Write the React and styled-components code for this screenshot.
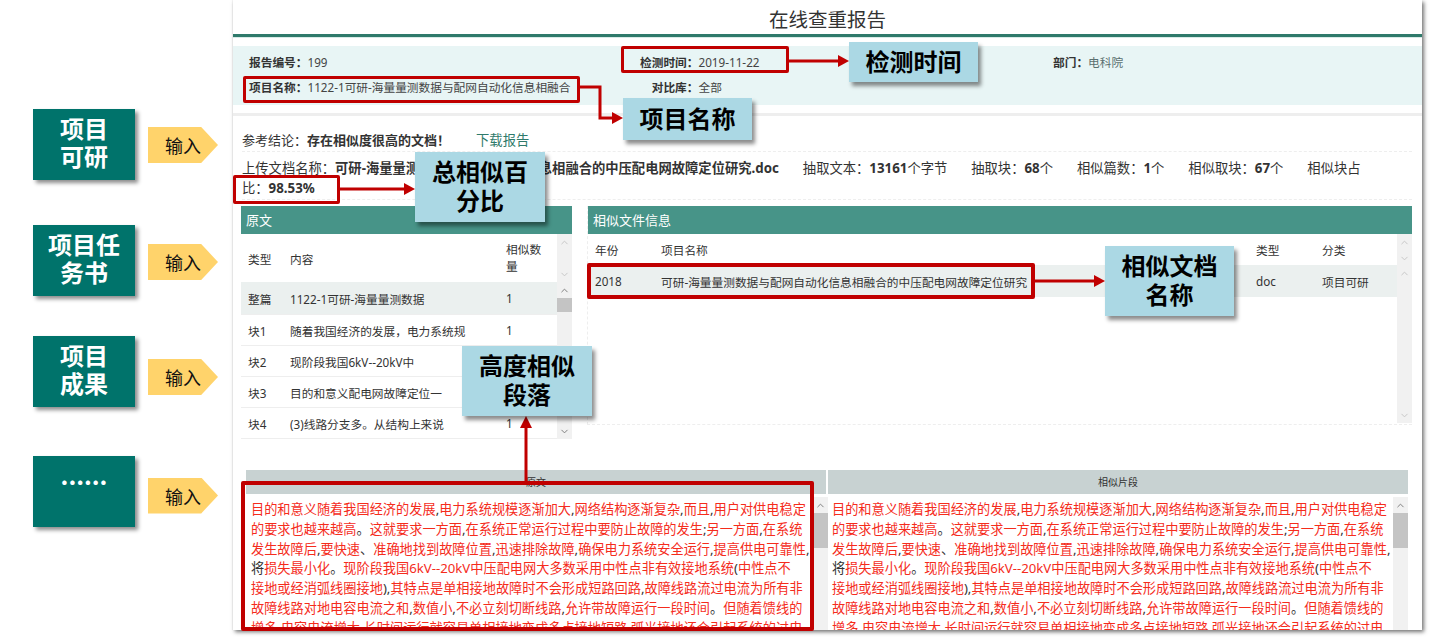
import styled, { createGlobalStyle } from 'styled-components'
import { ChevronUp, ChevronDown } from 'lucide-react'

const green = '#479488'
const red = '#c00000'
const hitRed = '#f52c1c'
// 全角标点
const COLON = '\uFF1A'
const BANG = '\uFF01'
const COMMA = '\uFF0C'

const labels = [
  { lines: ['项目', '可研'], top: 109, nudge: 1 },
  { lines: ['项目任', '务书'], top: 45, nudge: 3 },
  { lines: ['项目', '成果'], top: 40, nudge: 11 },
  { lines: ['......'], top: 49, nudge: 8, dots: true },
]

const originRows = [
  ['整篇', '1122-1可研-海量量测数据', '1'],
  ['块1', `随着我国经济的发展${COMMA}电力系统规`, '1'],
  ['块2', '现阶段我国6kV--20kV中', '1'],
  ['块3', '目的和意义配电网故障定位一', '1'],
  ['块4', '(3)线路分支多。从结构上来说', '1'],
]

const stats = [
  ['抽取文本', '13161', '个字节'],
  ['抽取块', '68', '个'],
  ['相似篇数', '1', '个'],
  ['相似取块', '67', '个'],
  ['相似块占比', '98.53%', ''],
]

const paragraph = [
  '目的和意义随着我国经济的发展,电力系统规模逐渐加大,网络结构逐渐复杂,而且,用户对供电稳定',
  '的要求也越来越高。这就要求一方面,在系统正常运行过程中要防止故障的发生;另一方面,在系统',
  '发生故障后,要快速、准确地找到故障位置,迅速排除故障,确保电力系统安全运行,提高供电可靠性,',
  '将损失最小化。现阶段我国6kV--20kV中压配电网大多数采用中性点非有效接地系统(中性点不',
  '接地或经消弧线圈接地),其特点是单相接地故障时不会形成短路回路,故障线路流过电流为所有非',
  '故障线路对地电容电流之和,数值小,不必立刻切断线路,允许带故障运行一段时间。但随着馈线的',
  '增多,电容电流增大,长时间运行就容易单相接地变成多点接地短路,弧光接地还会引起系统的过电',
]

const frames = [
  { x: 621, y: 46, w: 168, h: 27 },
  { x: 243, y: 76, w: 337, h: 27 },
  { x: 233, y: 175, w: 107, h: 29 },
  { x: 587, y: 263, w: 448, h: 36, thick: true },
  { x: 241, y: 481, w: 573, h: 150, thick: true },
]

const callouts = [
  { x: 849, y: 42, w: 129, h: 40, text: '检测时间' },
  { x: 623, y: 98, w: 129, h: 42, text: '项目名称' },
  { x: 415, y: 152, w: 130, h: 70, text: '总相似百分比' },
  { x: 1105, y: 246, w: 129, h: 70, text: '相似文档名称' },
  { x: 462, y: 346, w: 130, h: 70, text: '高度相似段落' },
]

function Marked({ text }) {
  // 标点和“将”在原图里不是红色
  return text.split(/([,;。、()将])/).map((part, i) =>
    /^[,;。、()将]$/.test(part) ? <span key={i}>{part}</span> : <Hit key={i}>{part}</Hit>
  )
}

function Scrollbar({ dim, thumb }) {
  return (
    <Track>
      <ArrowCell $dim={dim}><ChevronUp size={11} strokeWidth={2} /></ArrowCell>
      {thumb && <Thumb $h={thumb} />}
      <ArrowCell $dim={dim} $end><ChevronDown size={11} strokeWidth={2} /></ArrowCell>
    </Track>
  )
}

function ComparePane({ title, pad, width, gap }) {
  return (
    <Pane $width={width}>
      <PaneHead $gap={gap}>{title}</PaneHead>
      <PaneBody>
        <PaneText $pad={pad}>
          {paragraph.map((line, i) => <Line key={i}><Marked text={line} /></Line>)}
        </PaneText>
        <Scrollbar thumb={35} />
      </PaneBody>
    </Pane>
  )
}

export default function App() {
  return (
    <Stage>
      <GlobalStyle />
      <LabelColumn>
        {labels.map((l, i) => (
          <LabelRow key={i} $top={l.top}>
            <Card $dots={l.dots}>{l.lines.map(t => <div key={t}>{t}</div>)}</Card>
            <InputTag $nudge={l.nudge}>输入</InputTag>
          </LabelRow>
        ))}
      </LabelColumn>

      <Report>
        <Title>在线查重报告</Title>
        <InfoBand>
          <Field><b>报告编号{COLON}</b>199</Field>
          <Field $labelWidth={58.5}><b>检测时间{COLON}</b>2019-11-22</Field>
          <Field><b>部门{COLON}</b><Muted>电科院</Muted></Field>
          <Field><b>项目名称{COLON}</b>1122-1可研-海量量测数据与配网自动化信息相融合</Field>
          <Field $labelWidth={58.5}><b>对比库{COLON}</b>全部</Field>
        </InfoBand>
        <Divider />
        <Conclusion>
          参考结论{COLON}<strong>存在相似度很高的文档{BANG}</strong>
          <Download>下载报告</Download>
        </Conclusion>
        <Upload>
          <Stat>上传文档名称{COLON}<strong>可研-海量量测数据与配网自动化信息相融合的中压配电网故障定位研究.doc</strong></Stat>
          {stats.map(s => (
            <Stat key={s[0]}>{s[0]}{COLON}<strong>{s[1]}</strong>{s[2]}</Stat>
          ))}
        </Upload>

        <Tables>
          <TableBox $width={331}>
            <PanelHead>原文</PanelHead>
            <TableRegion $h={48}>
              <OriginRow $h={48}>
                <span>类型</span><span>内容</span><CountHead>相似数量</CountHead>
              </OriginRow>
              <Scrollbar dim />
            </TableRegion>
            <TableRegion $h={157}>
              <RowStack>
                {originRows.map((r, i) => (
                  <OriginRow key={r[0]} $h={i === 0 ? 33 : 31} $on={i === 0} $lined>
                    <span>{r[0]}</span><span>{r[1]}</span><span>{r[2]}</span>
                  </OriginRow>
                ))}
              </RowStack>
              <Scrollbar thumb={14} />
            </TableRegion>
          </TableBox>

          <TableBox $width={824} $dashed>
            <PanelHead>相似文件信息</PanelHead>
            <TableRegion $h={31}>
              <FileRow $h={31}>
                <span>年份</span><span>项目名称</span><span>类型</span><span>分类</span>
              </FileRow>
              <Scrollbar dim />
            </TableRegion>
            <TableRegion $h={158}>
              <RowStack>
                <FileRow $h={32} $on>
                  <span>2018</span>
                  <span>可研-海量量测数据与配网自动化信息相融合的中压配电网故障定位研究</span>
                  <span>doc</span>
                  <span>项目可研</span>
                </FileRow>
              </RowStack>
              <Scrollbar dim />
            </TableRegion>
          </TableBox>
        </Tables>

        <Compare>
          <ComparePane title="原文" pad={5} width={582} gap={2} />
          <ComparePane title="相似片段" pad={4} width={580} gap={0} />
        </Compare>
      </Report>

      {frames.map((f, i) => <Frame key={i} $x={f.x} $y={f.y} $w={f.w} $h={f.h} $thick={f.thick} />)}

      <Arrows viewBox="0 0 1437 637">
        <g fill="none" stroke={red} strokeWidth="3">
          <path d="M789 61H840" />
          <path d="M580 87H600V118H614" />
          <path d="M340 189H406" />
          <path d="M1035 281H1096" />
          <path d="M526 481V425" />
        </g>
        <g fill={red}>
          <path d="M838 55l11 6-11 6z" />
          <path d="M612 112l11 6-11 6z" />
          <path d="M404 183l11 6-11 6z" />
          <path d="M1094 275l11 6-11 6z" />
          <path d="M520 428l6-12 6 12z" />
        </g>
      </Arrows>

      {callouts.map(c => (
        <Callout key={c.text} $x={c.x} $y={c.y} $w={c.w} $h={c.h}>{c.text}</Callout>
      ))}
    </Stage>
  )
}

const GlobalStyle = createGlobalStyle`
  html, body {
    margin: 0;
    background: #fff;
  }
  body {
    font-family: "Noto Sans", "Noto Sans CJK SC", sans-serif;
    color: #333;
  }
`

const Stage = styled.div`
  position: relative;
  display: flex;
  align-items: flex-start;
  width: 1437px;
  height: 637px;
  overflow: hidden;
`

const LabelColumn = styled.div`
  flex: none;
  width: 233px;
  padding-left: 33px;
  box-sizing: border-box;
`

const LabelRow = styled.div`
  display: flex;
  align-items: center;
  gap: 13px;
  margin-top: ${p => p.$top}px;
`

const Card = styled.div`
  width: 102px;
  height: 71px;
  display: flex;
  flex-direction: column;
  justify-content: center;
  align-items: center;
  padding-bottom: ${p => (p.$dots ? 34 : 5)}px;
  box-sizing: border-box;
  background: #00736b;
  box-shadow: 3px 3px 4px rgba(0, 0, 0, 0.45);
  color: #fff;
  font-family: "Noto Sans CJK SC", sans-serif;
  font-weight: 700;
  font-size: 24px;
  line-height: 28px;
`

const InputTag = styled.div`
  width: 70px;
  height: 36px;
  margin-top: ${p => p.$nudge}px;
  padding-left: 17px;
  box-sizing: border-box;
  background: #ffd36b;
  clip-path: polygon(0 0, 76% 0, 100% 50%, 76% 100%, 0 100%);
  color: #111;
  font-family: "Noto Sans CJK SC", sans-serif;
  font-size: 18px;
  line-height: 36px;
`

const Report = styled.div`
  flex: none;
  display: flex;
  flex-direction: column;
  width: 1189px;
  height: 630px;
  overflow: hidden;
  background: #fff;
  box-shadow: 2px 2px 4px rgba(0, 0, 0, 0.55), -1px 0 1px rgba(0, 0, 0, 0.04);
`

const Title = styled.div`
  flex: none;
  height: 34px;
  line-height: 40px;
  text-align: center;
  font-size: 19.5px;
  color: #333;
  border-bottom: 3px solid #2f7a6b;
  box-shadow: 0 1px 0 #d8ebe7;
  box-sizing: content-box;
`

const InfoBand = styled.div`
  flex: none;
  display: grid;
  grid-template-columns: 391px 413px 1fr;
  grid-auto-rows: 25px;
  height: 59px;
  margin-top: 9px;
  padding: 3px 0 0 16px;
  box-sizing: border-box;
  background: #e8f5f5;
  font-size: 11.7px;
`

const Field = styled.div`
  display: flex;
  align-items: center;
  white-space: nowrap;
  color: #444;

  b {
    width: ${p => (p.$labelWidth ? `${p.$labelWidth}px` : 'auto')};
    text-align: ${p => (p.$labelWidth ? 'right' : 'left')};
    color: #333;
  }
`

const Muted = styled.span`
  color: #5b7070;
`

const Divider = styled.div`
  flex: none;
  height: 3px;
  margin-top: 8px;
  background: #eeeeee;
`

const Conclusion = styled.div`
  flex: none;
  height: 36px;
  margin: 0 10px 0 9px;
  padding-top: 15px;
  box-sizing: border-box;
  border-bottom: 1px dashed #eeeeee;
  font-size: 13px;
  line-height: 18px;

  strong {
    color: #333;
    font-weight: 700;
  }
`

const Download = styled.a`
  margin-left: 26px;
  color: #2f7a6b;
  font-size: 13.3px;
`

const Upload = styled.div`
  flex: none;
  height: 48px;
  margin: 0 10px 0 9px;
  padding: 6px 40px 0 0;
  box-sizing: border-box;
  border-bottom: 1px dashed #eeeeee;
  font-size: 13.3px;
  line-height: 20px;

  strong {
    font-weight: 700;
    color: #333;
  }
`

const Stat = styled.span`
  margin-right: 24px;

  &:last-child {
    margin-right: 0;
  }
`

const Tables = styled.div`
  flex: none;
  display: flex;
  gap: 16px;
  height: 234px;
  margin: 6px 0 0 8px;
`

const TableBox = styled.div`
  flex: none;
  display: flex;
  flex-direction: column;
  width: ${p => p.$width}px;
  height: ${p => (p.$dashed ? '218px' : '234px')};
  ${p => p.$dashed && 'border-bottom: 1px dashed #eeeeee; border-left: 1px dashed #eeeeee; box-sizing: content-box; margin-left: -1px;'}
`

const PanelHead = styled.div`
  flex: none;
  height: 28px;
  padding-left: 5px;
  background: ${green};
  color: #fff;
  font-size: 13px;
  line-height: 28px;
`

const TableRegion = styled.div`
  flex: none;
  display: flex;
  height: ${p => p.$h}px;
`

const RowStack = styled.div`
  flex: 1;
  min-width: 0;
`

const Row = styled.div`
  flex: 1;
  min-width: 0;
  display: grid;
  align-items: center;
  height: ${p => p.$h}px;
  padding-left: 7px;
  box-sizing: border-box;
  font-size: 11.7px;
  color: #333;
  background: ${p => (p.$on ? '#ebf0ef' : '#fff')};
  ${p => p.$lined && 'border-bottom: 1px solid #eeeeee;'}

  span {
    white-space: nowrap;
  }
`

const OriginRow = styled(Row)`
  grid-template-columns: 42px 216px 1fr;
`

const CountHead = styled.div`
  width: 42px;
  line-height: 17px;
`

const FileRow = styled(Row)`
  grid-template-columns: 66px 595px 66px 1fr;
`

const Track = styled.div`
  flex: none;
  width: 15px;
  display: flex;
  flex-direction: column;
  background: #f1f1f1;
`

const ArrowCell = styled.div`
  flex: none;
  height: 16px;
  display: flex;
  align-items: center;
  justify-content: center;
  color: ${p => (p.$dim ? '#c4c4c4' : '#777')};
  ${p => p.$end && 'margin-top: auto;'}
`

const Thumb = styled.div`
  flex: none;
  height: ${p => p.$h}px;
  background: #c4c4c4;
`

const Compare = styled.div`
  flex: none;
  display: flex;
  margin: 30px 0 0 13px;
`

const Pane = styled.div`
  flex: none;
  width: ${p => p.$width}px;
`

const PaneHead = styled.div`
  height: 24px;
  margin-right: ${p => p.$gap}px;
  background: #c8d2d2;
  color: #333;
  font-size: 10px;
  line-height: 24px;
  text-align: center;
`

// 比可见区域高,下方由 Report 的 overflow 裁掉
const PaneBody = styled.div`
  display: flex;
  height: 210px;
  padding-top: 3px;
  box-sizing: border-box;
`

const PaneText = styled.div`
  flex: 1;
  min-width: 0;
  padding: 3px 0 0 ${p => p.$pad}px;
  font-size: 13.2px;
  line-height: 19.8px;
  color: #333;
`

const Line = styled.div`
  white-space: nowrap;
`

const Hit = styled.span`
  color: ${hitRed};
`

const Frame = styled.div`
  position: absolute;
  left: ${p => p.$x}px;
  top: ${p => p.$y}px;
  width: ${p => p.$w}px;
  height: ${p => p.$h}px;
  box-sizing: border-box;
  border: ${p => (p.$thick ? 4 : 3)}px solid ${red};
  border-radius: 2px;
`

const Arrows = styled.svg`
  position: absolute;
  left: 0;
  top: 0;
  width: 1437px;
  height: 637px;
  pointer-events: none;
`

const Callout = styled.div`
  position: absolute;
  left: ${p => p.$x}px;
  top: ${p => p.$y}px;
  width: ${p => p.$w}px;
  height: ${p => p.$h}px;
  padding: 0 8px 4px;
  box-sizing: border-box;
  display: flex;
  align-items: center;
  justify-content: center;
  text-align: center;
  background: #abd8e4;
  box-shadow: 3px 4px 4px rgba(0, 0, 0, 0.45);
  color: #000;
  font-family: "Noto Sans CJK SC", sans-serif;
  font-weight: 700;
  font-size: 24px;
  line-height: 29px;
`
